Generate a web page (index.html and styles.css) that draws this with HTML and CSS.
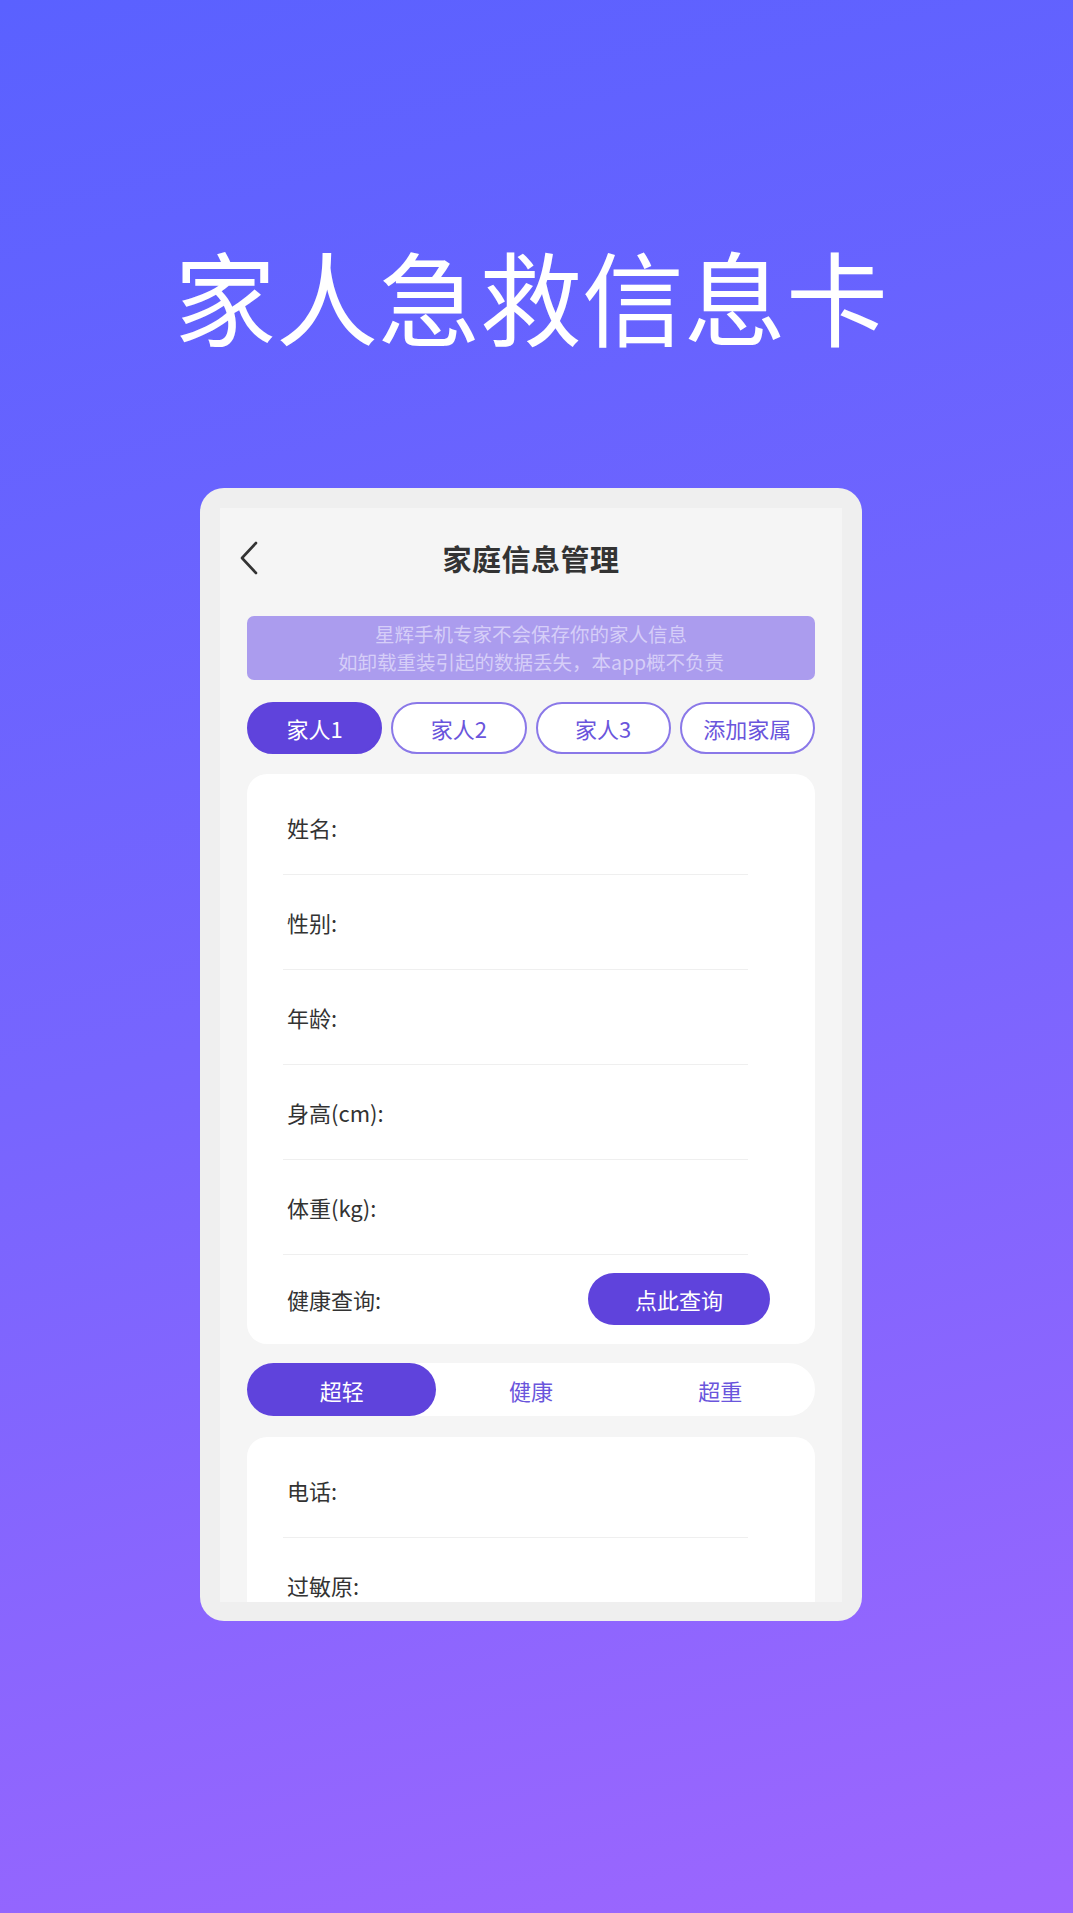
FILE: index.html
```html
<!DOCTYPE html>
<html lang="zh-CN">
<head>
<meta charset="utf-8">
<title>家人急救信息卡</title>
<link rel="stylesheet" href="styles.css">
</head>
<body>
<div class="page">
  <h1 class="hero">家人急救信息卡</h1>
  <div class="phone">
    <div class="screen">
      <div class="header">
        <svg class="back" width="22" height="34" viewBox="0 0 22 34"><path d="M18 2 L4 17 L18 32" fill="none" stroke="#333" stroke-width="2.6" stroke-linecap="round" stroke-linejoin="round"/></svg>
        <div class="title">家庭信息管理</div>
        <div></div>
      </div>
      <div class="notice">
        <p>星辉手机专家不会保存你的家人信息</p>
        <p>如卸载重装引起的数据丢失，本app概不负责</p>
      </div>
      <div class="tabs">
        <div class="tab active">家人1</div>
        <div class="tab">家人2</div>
        <div class="tab">家人3</div>
        <div class="tab">添加家属</div>
      </div>
      <div class="card">
        <div class="row"><span class="label">姓名:</span></div>
        <div class="row"><span class="label">性别:</span></div>
        <div class="row"><span class="label">年龄:</span></div>
        <div class="row"><span class="label">身高(cm):</span></div>
        <div class="row"><span class="label">体重(kg):</span></div>
        <div class="row last"><span class="label">健康查询:</span><div class="btn">点此查询</div></div>
      </div>
      <div class="segment">
        <div class="seg active">超轻</div>
        <div class="seg">健康</div>
        <div class="seg">超重</div>
      </div>
      <div class="card card2">
        <div class="row"><span class="label">电话:</span></div>
        <div class="row"><span class="label">过敏原:</span></div>
      </div>
    </div>
  </div>
</div>
</body>
</html>
```
FILE: styles.css
```css
* { box-sizing: border-box; }
html, body { margin: 0; padding: 0; }
body {
  width: 1073px;
  height: 1913px;
  overflow: hidden;
  font-family: "Noto Sans CJK SC", "Noto Sans", sans-serif;
  background: linear-gradient(165deg, #5a61ff 0%, #7765fe 50%, #9d66fe 100%);
}
.page {
  display: flex;
  flex-direction: column;
  align-items: center;
  padding-right: 11px;
}
.hero {
  margin: 243px 0 0 0;
  font-size: 102px;
  line-height: 104px;
  font-weight: 400;
  color: #fff;
}
.phone {
  margin-top: 141px;
  width: 662px;
  height: 1133px;
  padding: 20px;
  border-radius: 24px;
  background: #efefef;
}
.screen {
  height: 1094px;
  overflow: hidden;
  background: #f5f5f5;
}
.header {
  height: 100px;
  display: grid;
  grid-template-columns: 1fr auto 1fr;
  align-items: center;
  padding: 0 18px;
}
.back { display: block; }
.title {
  font-size: 29px;
  font-weight: 700;
  color: #333;
  letter-spacing: 0.5px;
}
.notice {
  margin: 8px 27px 0;
  height: 64px;
  padding: 4px 0;
  background: #ab9cee;
  border-radius: 7px;
  text-align: center;
  color: #d6cef8;
  font-size: 19.5px;
  line-height: 28px;
}
.notice p { margin: 0; }
.tabs {
  margin: 22px 27px 0;
  display: grid;
  grid-template-columns: repeat(4, 1fr);
  gap: 9px;
}
.tab {
  height: 52px;
  border: 2px solid #8a78e8;
  border-radius: 26px;
  background: #fff;
  color: #6a55dc;
  font-size: 22px;
  display: flex;
  align-items: center;
  justify-content: center;
}
.tab.active {
  background: #5f43dc;
  border-color: #5f43dc;
  color: #fff;
}
.card {
  margin: 20px 27px 0;
  background: #fff;
  border-radius: 20px;
  padding: 6px 0 1px;
}
.row {
  height: 95px;
  margin: 0 67px 0 36px;
  padding-left: 4px;
  border-bottom: 1px solid #efefef;
  display: flex;
  align-items: center;
}
.label {
  font-size: 22px;
  color: #333;
}
.row.last {
  height: 88px;
  border-bottom: none;
  margin-right: 45px;
  justify-content: space-between;
}
.btn {
  width: 182px;
  height: 52px;
  border-radius: 26px;
  background: #5f43dc;
  color: #fff;
  font-size: 22px;
  display: flex;
  align-items: center;
  justify-content: center;
}
.segment {
  margin: 19px 27px 0;
  height: 53px;
  border-radius: 27px;
  background: #fff;
  display: grid;
  grid-template-columns: repeat(3, 1fr);
}
.seg {
  display: flex;
  align-items: center;
  justify-content: center;
  font-size: 22px;
  color: #6a55dc;
  border-radius: 27px;
}
.seg.active {
  background: #5f43dc;
  color: #fff;
}
.card2 {
  margin-top: 21px;
  min-height: 300px;
}
```
